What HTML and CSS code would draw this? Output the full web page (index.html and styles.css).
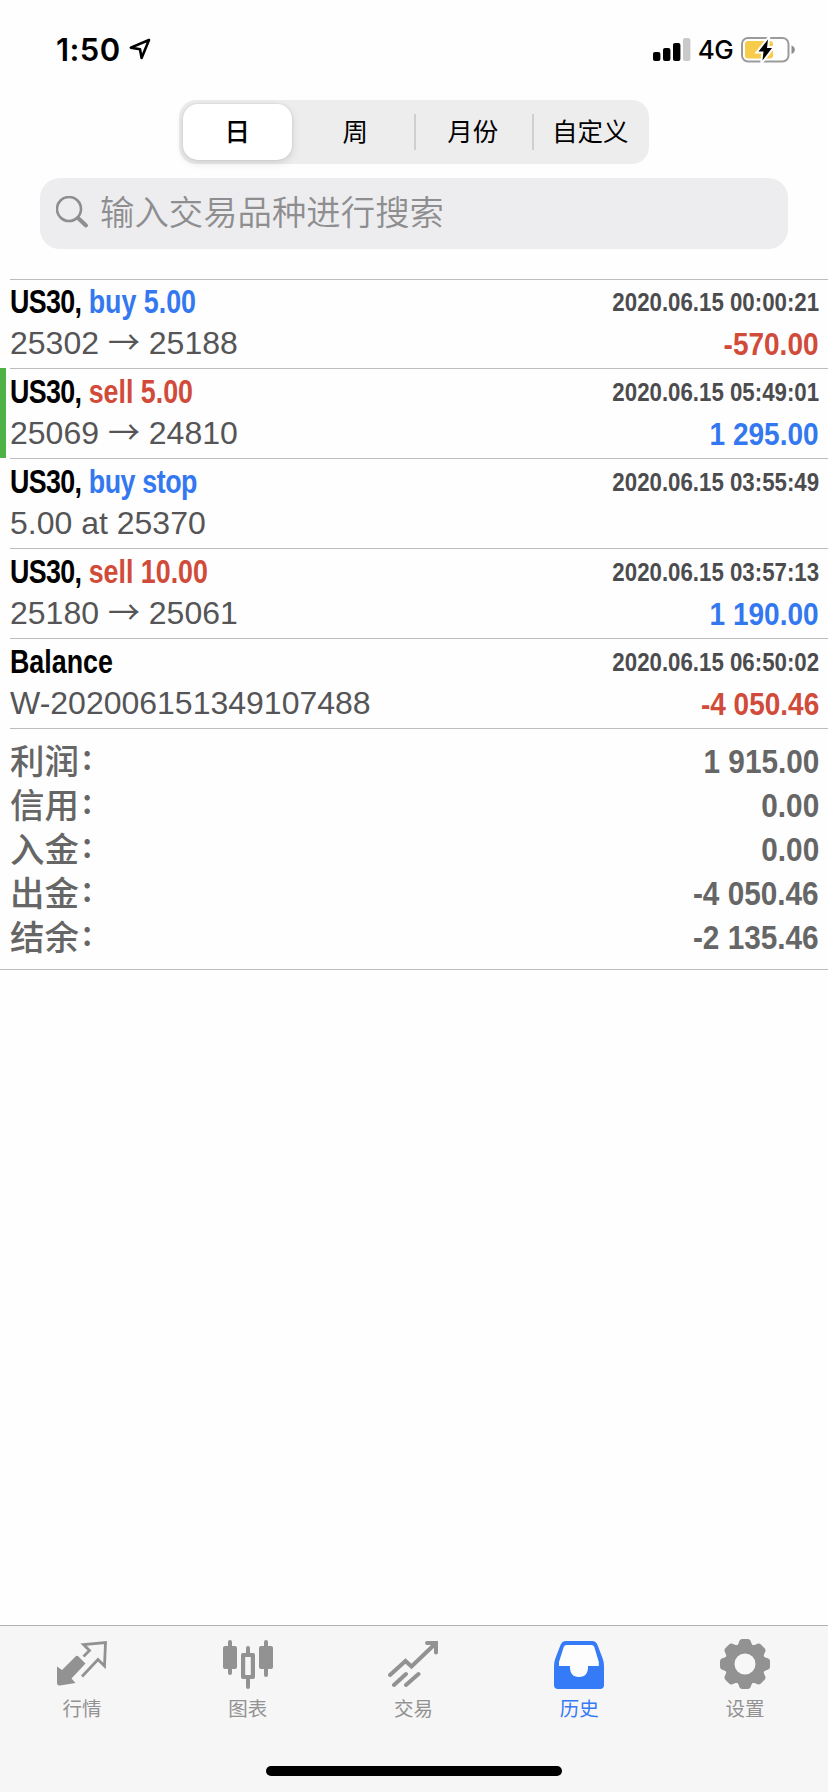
FILE: index.html
```html
<!DOCTYPE html>
<html lang="zh-CN">
<head>
<meta charset="utf-8">
<title>历史</title>
<link rel="stylesheet" href="styles.css">
</head>
<body>
<div class="screen">
  <header class="status">
    <div class="clock">1:50
      <svg class="locate" width="22" height="22" viewBox="0 0 22 22"><path d="M20 2 1.8 9.6 11 11.2 12.6 20Z" fill="none" stroke="#000" stroke-width="2.6" stroke-linejoin="round"/></svg>
    </div>
    <div class="indicators">
      <svg width="38" height="24" viewBox="0 0 38 24"><rect x="0" y="14" width="7.4" height="9" rx="2"/><rect x="10" y="10" width="7.4" height="13" rx="2"/><rect x="20" y="5" width="7.4" height="18" rx="2"/><rect x="30" y="0" width="7.4" height="23" rx="2" fill="#c9c9c9"/></svg>
      <span class="network">4G</span>
      <svg class="battery" width="54" height="28" viewBox="0 0 54 28"><rect x="1" y="2" width="46.5" height="23.5" rx="6" fill="#fff" stroke="#9b9b9b" stroke-width="2"/><rect x="4" y="5" width="28" height="17.5" rx="3" fill="#f7cc4b"/><path d="M50.5 9.5c2.4.7 3.3 2.300 3.300 4.200s-.9 3.500-3.300 4.200z" fill="#8e8e8e"/><path d="M27 3.500 17.500 15.500h5L21.500 24.500 31 12H26z" fill="#000" stroke="#fff" stroke-width="4" paint-order="stroke"/></svg>
    </div>
  </header>

  <nav class="segments">
    <span class="segment selected">日</span>
    <span class="segment">周</span>
    <span class="segment divided">月份</span>
    <span class="segment divided">自定义</span>
  </nav>

  <div class="search">
    <svg width="34" height="34" viewBox="0 0 34 34" fill="none" stroke="#8e8e90"><circle cx="13" cy="13" r="12" stroke-width="2.600"/><path d="M22 22 30 29.500" stroke-width="4" stroke-linecap="round"/></svg>
    <span>输入交易品种进行搜索</span>
  </div>

  <main class="deals">
    <section class="deal">
      <div class="line"><span class="title"><b class="symbol">US30,</b> <span class="blue">buy 5.00</span></span><time>2020.06.15 00:00:21</time></div>
      <div class="line second"><span class="price">25302 <i>→</i> 25188</span><span class="amount red">-570.00</span></div>
    </section>
    <section class="deal marked">
      <div class="line"><span class="title"><b class="symbol">US30,</b> <span class="red">sell 5.00</span></span><time>2020.06.15 05:49:01</time></div>
      <div class="line second"><span class="price">25069 <i>→</i> 24810</span><span class="amount blue">1 295.00</span></div>
    </section>
    <section class="deal">
      <div class="line"><span class="title"><b class="symbol">US30,</b> <span class="blue tight">buy stop</span></span><time>2020.06.15 03:55:49</time></div>
      <div class="line second"><span class="price">5.00 at 25370</span></div>
    </section>
    <section class="deal">
      <div class="line"><span class="title"><b class="symbol">US30,</b> <span class="red">sell 10.00</span></span><time>2020.06.15 03:57:13</time></div>
      <div class="line second"><span class="price">25180 <i>→</i> 25061</span><span class="amount blue">1 190.00</span></div>
    </section>
    <section class="deal">
      <div class="line"><span class="title">Balance</span><time>2020.06.15 06:50:02</time></div>
      <div class="line second"><span class="price">W-202006151349107488</span><span class="amount red">-4 050.46</span></div>
    </section>
  </main>

  <section class="summary">
    <div class="total"><span class="label">利润<em>:</em></span><span class="sum">1 915.00</span></div>
    <div class="total"><span class="label">信用<em>:</em></span><span class="sum">0.00</span></div>
    <div class="total"><span class="label">入金<em>:</em></span><span class="sum">0.00</span></div>
    <div class="total"><span class="label">出金<em>:</em></span><span class="sum">-4 050.46</span></div>
    <div class="total"><span class="label">结余<em>:</em></span><span class="sum">-2 135.46</span></div>
  </section>

  <footer class="tabbar">
    <div class="tabs">
      <div class="tab">
        <svg width="50" height="50" viewBox="0 0 50 50"><path d="M0 27.500 5 31 18.500 17.500Q20 16 21.500 17.500L28.500 24.500 14.500 39.500 18.500 44 3 46.500Q0 47 0 44Z" fill="#929292"/><path d="M26.500 17.500 32.500 11.500 26.500 5.500 48.500 3.500 47.500 27 41 20.500 25 37.500" fill="none" stroke="#929292" stroke-width="2.800"/></svg>
        <span>行情</span>
      </div>
      <div class="tab">
        <svg width="50" height="50" viewBox="0 0 50 50" fill="#929292"><rect y="7" width="14" height="23" rx="2"/><rect x="5" y="1" width="4" height="35" rx="2"/><rect x="36" y="7" width="14" height="23" rx="2"/><rect x="41" y="1" width="4" height="37" rx="2"/><path fill-rule="evenodd" d="M20 14h10q2 0 2 2v22q0 2-2 2H20q-2 0-2-2V16q0-2 2-2zm2.200 4v18h5.600V18z"/><path d="M23 16V9q0-2 2-2t2 2v7zM23 39v9q0 2 2 2t2-2v-9z"/></svg>
        <span>图表</span>
      </div>
      <div class="tab">
        <svg width="50" height="50" viewBox="0 0 50 50" fill="none" stroke="#929292" stroke-width="4" stroke-linecap="round"><path d="M2 36 17.500 22 23.500 27.500 47 5M6 46 18 35M18 46 30.500 35M39 4H48V13.500"/></svg>
        <span>交易</span>
      </div>
      <div class="tab active">
        <svg width="50" height="50" viewBox="0 0 50 50"><path d="M12 2H38Q42 2 43.500 6L48.500 19Q50 23 50 27V46Q50 50 46 50H4Q0 50 0 46V27Q0 23 1.500 19L6.500 6Q8 2 12 2Z" fill="#357af6"/><path d="M12.500 6H37.500Q39.500 6 40.300 8L44.800 23V27H34V28C34 34 31.500 38 25 38S16 34 16 28V27H5V23L9.700 8Q10.500 6 12.500 6Z" fill="#fdfdfd"/></svg>
        <span>历史</span>
      </div>
      <div class="tab">
        <svg width="50" height="50" viewBox="-25 -25 50 50"><g fill="#929292"><circle r="20"/><g id="teeth"><path id="tooth" d="M-10-17.500Q-7-18-6-22Q-5.300-25-2.500-25H2.500Q5.300-25 6-22Q7-18 10-17.500L9-10H-9Z"/><use href="#tooth" transform="rotate(90)"/><use href="#tooth" transform="rotate(180)"/><use href="#tooth" transform="rotate(270)"/></g><use href="#teeth" transform="rotate(45)"/></g><circle r="10.500" fill="#f7f7f7"/></svg>
        <span>设置</span>
      </div>
    </div>
    <div class="home"></div>
  </footer>
</div>
</body>
</html>
```

FILE: styles.css
```css
* { box-sizing: border-box; }
body { margin: 0; background: #fff; font-family: "Liberation Sans", "Noto Sans CJK SC", sans-serif; }
.screen { width: 828px; height: 1792px; display: flex; flex-direction: column; overflow: hidden; background: #fefefe; }
svg { display: block; flex: none; }

.status { height: 100px; display: flex; justify-content: space-between; padding: 0 33px 0 56px; font-family: Inter, sans-serif; }
.clock { display: flex; height: 98px; align-items: center; gap: 8px; font-size: 31px; font-weight: 600; letter-spacing: .4px; }
.indicators { display: flex; height: 99px; align-items: center; }
.network { font-size: 26px; font-weight: 500; margin: 0 8px 0 7px; letter-spacing: -.6px; }

.segments { width: 470px; height: 64px; margin-left: 179px; padding: 4px 0 4px 4px; border-radius: 17px; background: #ededee; display: flex; font: 400 25.500px/52px "Noto Sans CJK SC", sans-serif; color: #000; }
.segment { width: 118px; height: 56px; display: flex; justify-content: center; align-items: center; padding-bottom: 4px; }
.segment.selected { width: 109px; margin-right: 5px; border-radius: 15px; background: #fff; font-weight: 500; box-shadow: 0 3px 8px rgba(0,0,0,.12), 0 0 3px rgba(0,0,0,.1); }
.segment.divided { background: linear-gradient(#cfcfd1, #cfcfd1) left center / 2px 36px no-repeat; }

.search { width: 748px; height: 71px; flex: none; margin: 14px 0 30px 40px; padding: 0 0 1px 16px; border-radius: 20px; background: #ededef; display: flex; align-items: center; gap: 10px; font: 350 34.4px/50px "Noto Sans CJK SC", sans-serif; color: #8e8e90; }
.search span { padding-bottom: 7px; }

.deals { padding-left: 10px; }
.deal { height: 90px; border-top: 1px solid #bcbcbe; padding-top: 1px; }
.deal:first-child { height: 89px; padding-top: 0; }
.deal.marked { margin-left: -10px; border-left: 6px solid #4fb246; border-top: 0; padding: 2px 0 0 4px; background: linear-gradient(#bcbcbe, #bcbcbe) 4px 0 / 100% 1px no-repeat; }
.line { height: 44px; padding-right: 9px; display: flex; justify-content: space-between; align-items: center; white-space: pre; }
.line.second { height: 39px; }
.title { font-size: 32.500px; font-weight: 700; transform: scaleX(.825); transform-origin: left center; color: #000; }
.symbol { letter-spacing: -.8px; }
.tight { letter-spacing: -.5px; }
time { font-size: 26.500px; font-weight: 700; color: #4c4c4f; transform: scaleX(.84); transform-origin: right center; }
.price { font-size: 32px; color: #555557; padding-bottom: 1px; }
.price i { font-family: "Noto Sans CJK SC", sans-serif; font-style: normal; line-height: 1; }
.amount { font-size: 32px; font-weight: 700; padding-top: 2px; transform: scaleX(.875); transform-origin: right center; }
.blue { color: #3478f0; }
.red { color: #d14b3a; }

.summary { height: 242px; flex: none; border-bottom: 1px solid #bcbcbe; padding: 11px 9px 0 10px; background: linear-gradient(#bcbcbe, #bcbcbe) 10px 0 / 100% 1px no-repeat; }
.total { height: 44px; display: flex; justify-content: space-between; align-items: center; color: #666; }
.label { height: 44px; display: flex; font: 500 34.500px/40px "Noto Sans CJK SC", sans-serif; }
.label em { font-style: normal; margin: -4px 0 0 3px; }
.sum { font: 700 34px/44px "Liberation Sans", sans-serif; transform: scaleX(.875); transform-origin: right center; }

.tabbar { height: 167px; flex: none; margin-top: auto; border-top: 1px solid #b0b2b1; background: #f6f6f6; }
.tabs { display: flex; height: 140px; margin-left: -1px; }
.tab { flex: 1; display: flex; flex-direction: column; align-items: center; padding-top: 13px; gap: 5px; color: #929292; font: 400 19.500px/28px "Noto Sans CJK SC", sans-serif; }
.tab.active { color: #357af6; }
.home { width: 296px; height: 10px; margin: 0 auto; border-radius: 5px; background: #000; }
```
